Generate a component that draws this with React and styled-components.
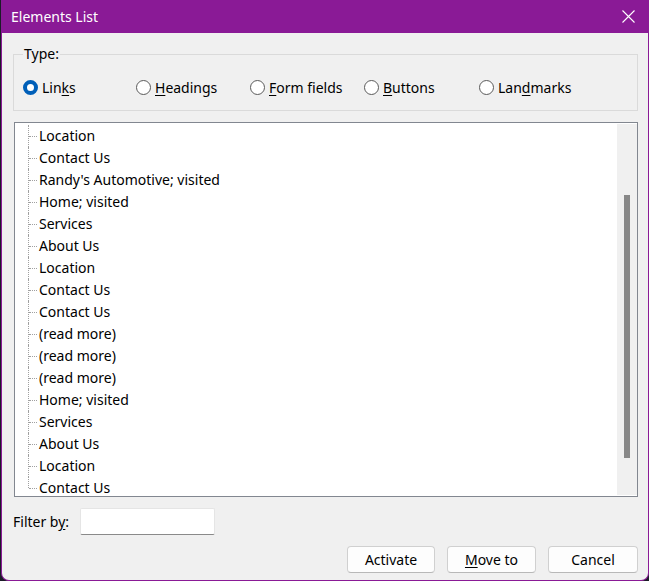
import React from "react";
import styled, { createGlobalStyle } from "styled-components";

const Global = createGlobalStyle`
  html, body {
    margin: 0;
    padding: 0;
    background: #1c1c28;
  }
  body {
    font-family: "Segoe UI", "Noto Sans", sans-serif;
    font-size: 14px;
    color: #000;
  }
`;

const Window = styled.div`
  width: 646px;
  height: 580px;
  margin-left: 1px;
  background: #f0f0f0;
  border: 1px solid #8a1a96;
  border-top: none;
  border-radius: 0 0 8px 8px;
  display: flex;
  flex-direction: column;
  overflow: hidden;
`;

const TitleBar = styled.div`
  height: 33px;
  flex-shrink: 0;
  background: #8a1a96;
  color: #fff;
  display: flex;
  align-items: center;
  justify-content: space-between;
  padding: 0 12px 0 9px;
  font-size: 14px;
`;

const CloseButton = styled.button`
  width: 16px;
  height: 16px;
  padding: 0;
  border: none;
  background: transparent;
  display: flex;
  align-items: center;
  justify-content: center;
`;

const Body = styled.div`
  flex: 1;
  display: flex;
  flex-direction: column;
  padding: 12px 10px 0 11px;
`;

const GroupBox = styled.fieldset`
  margin: 0;
  border: 1px solid #dadada;
  padding: 14px 0 13px 9px;
  min-width: 0;
`;

const Legend = styled.legend`
  padding: 0 1px;
  margin-left: 0;
  line-height: 18px;
`;

const RadioRow = styled.div`
  display: flex;
  align-items: center;
  height: 20px;
`;

const RadioItem = styled.label`
  display: flex;
  align-items: center;
  gap: 4px;
  width: ${(p) => p.$w}px;
`;

const RadioDot = styled.span`
  width: 15px;
  height: 15px;
  box-sizing: border-box;
  border-radius: 50%;
  border: ${(p) => (p.$on ? "4.5px solid #005fb8" : "1px solid #5a5a5a")};
  background: #fff;
  flex-shrink: 0;
`;

const Key = styled.span`
  text-decoration: underline;
  text-underline-offset: 2px;
`;

const ListBox = styled.div`
  margin-top: 11px;
  margin-left: 1px;
  height: 375px;
  flex-shrink: 0;
  box-sizing: border-box;
  border: 1px solid #828790;
  background: #fff;
  display: flex;
  overflow: hidden;
`;

const Tree = styled.div`
  flex: 1;
  padding: 2px 0 0 13px;
  overflow: hidden;
`;

const Row = styled.div`
  position: relative;
  height: 22px;
  line-height: 22px;
  padding-left: 11px;
  white-space: nowrap;

  &::before {
    content: "";
    position: absolute;
    left: 0;
    top: 0;
    height: ${(p) => (p.$last ? "11px" : "22px")};
    border-left: 1px dotted #a0a0a0;
  }
  &::after {
    content: "";
    position: absolute;
    left: 1px;
    top: 11px;
    width: 8px;
    border-top: 1px dotted #a0a0a0;
  }
`;

const ScrollTrack = styled.div`
  width: 20px;
  margin: 1px 0;
  background: #f0f0f0;
  display: flex;
  justify-content: center;
  padding-top: 71px;
  box-sizing: border-box;
`;

const Thumb = styled.div`
  width: 6px;
  height: 263px;
  background: #888888;
`;

const FilterRow = styled.div`
  display: flex;
  align-items: center;
  gap: 11px;
  margin-top: 11px;
`;

const FilterInput = styled.div`
  width: 135px;
  height: 27px;
  box-sizing: border-box;
  background: #fff;
  border: 1px solid #e5e5e5;
  border-bottom: 1px solid #8a8a8a;
  border-radius: 2px;
`;

const ButtonRow = styled.div`
  display: flex;
  justify-content: flex-end;
  gap: 12px;
  margin-top: 11px;
`;

const Button = styled.button`
  width: ${(p) => p.$w}px;
  height: 27px;
  font: inherit;
  color: #000;
  background: #fdfdfd;
  border: 1px solid #d0d0d0;
  border-bottom-color: #b8b8b8;
  border-radius: 4px;
  padding: 0;
`;

const items = [
  "Location",
  "Contact Us",
  "Randy's Automotive; visited",
  "Home; visited",
  "Services",
  "About Us",
  "Location",
  "Contact Us",
  "Contact Us",
  "(read more)",
  "(read more)",
  "(read more)",
  "Home; visited",
  "Services",
  "About Us",
  "Location",
  "Contact Us",
];

const App = () => {
  return (
    <>
      <Global />
      <Window>
        <TitleBar>
          <span>Elements List</span>
          <CloseButton aria-label="Close">
            <svg width="13" height="13" viewBox="0 0 13 13">
              <path d="M0.5 0.5 L12.5 12.5 M12.5 0.5 L0.5 12.5" stroke="#fff" strokeWidth="1.1" />
            </svg>
          </CloseButton>
        </TitleBar>
        <Body>
          <GroupBox>
            <Legend>Type:</Legend>
            <RadioRow>
              <RadioItem $w={113}>
                <RadioDot $on />
                <span>Lin<Key>k</Key>s</span>
              </RadioItem>
              <RadioItem $w={114}>
                <RadioDot />
                <span><Key>H</Key>eadings</span>
              </RadioItem>
              <RadioItem $w={114}>
                <RadioDot />
                <span><Key>F</Key>orm fields</span>
              </RadioItem>
              <RadioItem $w={115}>
                <RadioDot />
                <span><Key>B</Key>uttons</span>
              </RadioItem>
              <RadioItem $w={120}>
                <RadioDot />
                <span>Lan<Key>d</Key>marks</span>
              </RadioItem>
            </RadioRow>
          </GroupBox>
          <ListBox>
            <Tree>
              {items.map((t, i) => (
                <Row key={i} $last={i === items.length - 1}>
                  {t}
                </Row>
              ))}
            </Tree>
            <ScrollTrack>
              <Thumb />
            </ScrollTrack>
          </ListBox>
          <FilterRow>
            <span>Filter b<Key>y</Key>:</span>
            <FilterInput />
          </FilterRow>
          <ButtonRow>
            <Button $w={88}>Activate</Button>
            <Button $w={89}><Key>M</Key>ove to</Button>
            <Button $w={90}>Cancel</Button>
          </ButtonRow>
        </Body>
      </Window>
    </>
  );
};

export default App;
